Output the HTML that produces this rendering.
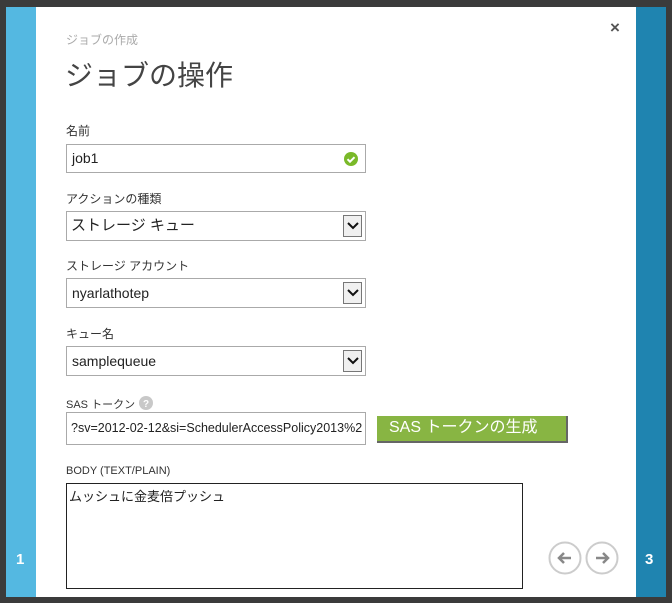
<!DOCTYPE html>
<html><head><meta charset="utf-8"><style>
*{margin:0;padding:0;box-sizing:border-box}
body{width:672px;height:603px;background:#3b3b3b;position:relative;overflow:hidden;font-family:"Liberation Sans","Noto Sans CJK JP",sans-serif;color:#333}
.a{position:absolute}
.lbl{position:absolute;left:66px;font-size:12px;color:#333}
.inp{position:absolute;left:66px;width:300px;border:1px solid #aaa;background:#fff;font-size:14px;color:#222;padding-left:5px;white-space:nowrap;overflow:hidden}
.dd{position:absolute;right:3px;top:3px;width:19px;height:22px;border:1px solid #777;background:#f0f0f0}
.dd svg{position:absolute;left:3px;top:6px}
</style></head><body>
<div class="a" style="left:6px;top:7px;width:30px;height:590px;background:#54b8e1"></div>
<div class="a" style="left:36px;top:7px;width:600px;height:590px;background:#fff"></div>
<div class="a" style="left:636px;top:7px;width:30px;height:590px;background:#1f84b0"></div>
<div class="a" style="left:16px;top:551px;color:#fff;font-weight:bold;font-size:15px">1</div>
<div class="a" style="left:645px;top:551px;color:#fff;font-weight:bold;font-size:15px">3</div>
<div class="a" style="left:610px;top:18px;font-size:17px;color:#555;font-weight:bold">×</div>
<div class="a" style="left:66px;top:31px;font-size:12px;color:#aaa">ジョブの作成</div>
<div class="a" style="left:65px;top:54px;font-size:28px;color:#444">ジョブの操作</div>
<div class="lbl" style="top:122px">名前</div>
<div class="inp" style="top:144px;height:29px;line-height:27px">job1
<svg class="a" style="right:7px;top:7px" width="14" height="14"><circle cx="7" cy="7" r="7" fill="#7ab929"/><path d="M3.5 7.2l2.5 2.5 4.5-4.5" stroke="#fff" stroke-width="2" fill="none"/></svg></div>
<div class="lbl" style="top:190px">アクションの種類</div>
<div class="inp" style="top:211px;height:30px;line-height:28px;font-size:15px;padding-left:4px">ストレージ キュー<div class="dd"><svg width="12" height="8"><path d="M1 1l5 5 5-5" stroke="#111" stroke-width="2" fill="none"/></svg></div></div>
<div class="lbl" style="top:257px">ストレージ アカウント</div>
<div class="inp" style="top:278px;height:30px;line-height:28px">nyarlathotep<div class="dd"><svg width="12" height="8"><path d="M1 1l5 5 5-5" stroke="#111" stroke-width="2" fill="none"/></svg></div></div>
<div class="lbl" style="top:325px">キュー名</div>
<div class="inp" style="top:346px;height:30px;line-height:28px">samplequeue<div class="dd"><svg width="12" height="8"><path d="M1 1l5 5 5-5" stroke="#111" stroke-width="2" fill="none"/></svg></div></div>
<div class="lbl" style="top:396px;font-size:11px">SAS トークン</div>
<svg class="a" style="left:139px;top:396px" width="14" height="14"><circle cx="7" cy="7" r="7" fill="#c8c8c8"/><text x="7" y="11" text-anchor="middle" font-size="10" fill="#fff" font-weight="bold" font-family="Liberation Sans">?</text></svg>
<div class="inp" style="top:412px;height:33px;line-height:31px;font-size:12.5px;padding-left:4px">?sv=2012-02-12&amp;si=SchedulerAccessPolicy2013%2</div>
<div class="a" style="left:377px;top:416px;width:191px;height:27px;background:#88b543;border-right:2px solid #666;border-bottom:2px solid #666;color:#fff;font-size:16px;line-height:24px;padding-left:12px">SAS トークンの生成</div>
<div class="lbl" style="top:465px;font-size:11px">BODY (TEXT/PLAIN)</div>
<div class="a" style="left:66px;top:483px;width:457px;height:106px;border:1px solid #222;font-size:13px;padding:2px 2px;color:#222">ムッシュに金麦倍プッシュ</div>
<svg class="a" style="left:548px;top:540px" width="74" height="36"><circle cx="17" cy="18" r="15.5" fill="none" stroke="#ccc" stroke-width="2"/><circle cx="54" cy="18" r="15.5" fill="none" stroke="#ccc" stroke-width="2"/><path d="M23 18h-12M16 13l-5 5 5 5" stroke="#888" stroke-width="2.5" fill="none"/><path d="M48 18h12M55 13l5 5-5 5" stroke="#888" stroke-width="2.5" fill="none"/></svg>
</body></html>
